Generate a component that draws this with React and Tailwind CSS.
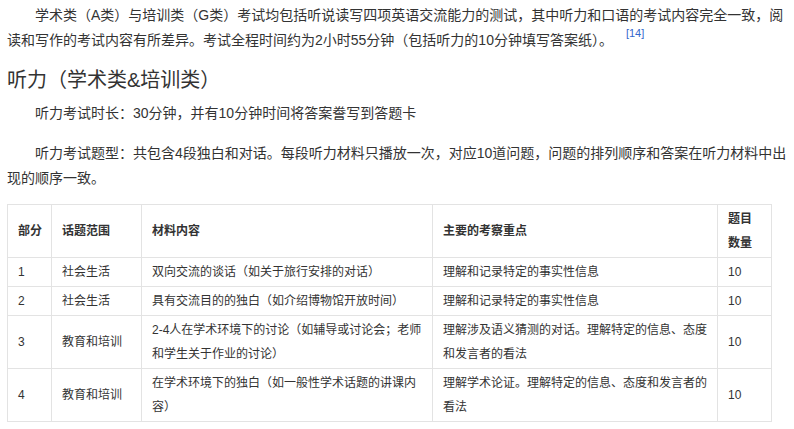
const rows = [
  ['1', '社会生活', '双向交流的谈话（如关于旅行安排的对话）', '理解和记录特定的事实性信息', '10'],
  ['2', '社会生活', '具有交流目的的独白（如介绍博物馆开放时间）', '理解和记录特定的事实性信息', '10'],
  ['3', '教育和培训', '2-4人在学术环境下的讨论（如辅导或讨论会；老师和学生关于作业的讨论）', '理解涉及语义猜测的对话。理解特定的信息、态度和发言者的看法', '10'],
  ['4', '教育和培训', '在学术环境下的独白（如一般性学术话题的讲课内容）', '理解学术论证。理解特定的信息、态度和发言者的看法', '10'],
]

const cell = 'border border-[#e3e3e3] px-[10px] py-[2px] align-middle'
const first = 'border border-[#e3e3e3] pl-[10px] pr-[2px] py-[2px] align-middle'

export default function App() {
  return (
    <div
      className="w-[794px] bg-white pl-[7px] pr-[6px] pt-[3px] text-[#333] text-[14px] leading-[25px]"
      style={{ fontFamily: '"Liberation Sans", "Noto Sans CJK SC", sans-serif' }}
    >
      <p className="indent-[28px]">
        学术类（A类）与培训类（G类）考试均包括听说读写四项英语交流能力的测试，其中听力和口语的考试内容完全一致，阅读和写作的考试内容有所差异。考试全程时间约为2小时55分钟（包括听力的10分钟填写答案纸）。
        <span className="ml-[13px] inline-block align-top text-[11px] leading-[14px] text-[#3366cc] relative -top-[2px] indent-0">[14]</span>
      </p>

      <h2 className="mt-[12px] text-[20px] leading-[30px] font-normal text-[#333]">听力（学术类&培训类）</h2>

      <p className="mt-[6px] indent-[28px]">听力考试时长：30分钟，并有10分钟时间将答案誊写到答题卡</p>

      <p className="mt-[15px] indent-[28px]">
        听力考试题型：共包含4段独白和对话。每段听力材料只播放一次，对应10道问题，问题的排列顺序和答案在听力材料中出现的顺序一致。
      </p>

      <table className="mt-[13px] w-[764px] border-collapse table-fixed text-[12px] leading-[24px]">
        <colgroup>
          <col className="w-[44px]" />
          <col className="w-[90px]" />
          <col className="w-[291px]" />
          <col className="w-[285px]" />
          <col className="w-[54px]" />
        </colgroup>
        <thead>
          <tr className="font-bold text-left">
            <th className={first}>部分</th>
            <th className={cell}>话题范围</th>
            <th className={cell}>材料内容</th>
            <th className={cell}>主要的考察重点</th>
            <th className={cell}>题目数量</th>
          </tr>
        </thead>
        <tbody>
          {rows.map((r) => (
            <tr key={r[0]}>
              {r.map((v, i) => (
                <td key={i} className={i === 0 ? first : cell}>{v}</td>
              ))}
            </tr>
          ))}
        </tbody>
      </table>
    </div>
  )
}
